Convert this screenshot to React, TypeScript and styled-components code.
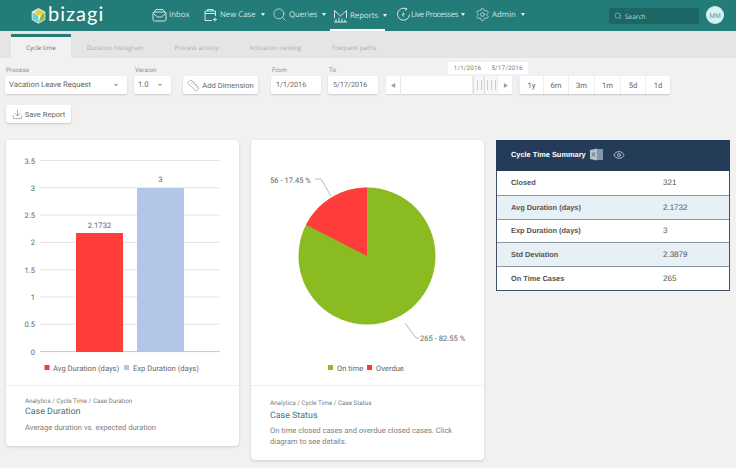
import React from "react";
import styled, { createGlobalStyle } from "styled-components";
import { ChevronDown, Download, Eye, Ruler, Search, Settings, Play } from "lucide-react";

const Global = createGlobalStyle`
  html, body { margin: 0; padding: 0; background: #f1f1f1; }
  body { font-family: Roboto, "Liberation Sans", sans-serif; color: #555; overflow: hidden; text-rendering: geometricPrecision; }
  svg text { text-rendering: geometricPrecision; }
  * { box-sizing: border-box; }
`;

const Page = styled.div`width: 736px; height: 468px; overflow: hidden; background: #f1f1f1;`;

const Header = styled.header`
  height: 31px; background: #247c79; display: flex; align-items: stretch; color: #d8ecea;
`;
const Brand = styled.div`width: 149px; padding-left: 31px; display: flex; align-items: center; gap: 2px; flex: none;`;
const BrandName = styled.span`font: 400 20px/31px Lato, sans-serif; color: #fff; letter-spacing: 1px; margin-top: -2px;`;
const Nav = styled.nav`display: flex; align-items: stretch; flex: none;`;
const NavItem = styled.div<{ $w: number; $ml?: number; $active?: boolean; $tight?: boolean }>`
  width: ${p => p.$w}px; margin-left: ${p => p.$ml ?? 0}px; height: 31px; display: flex; align-items: center; gap: ${p => (p.$tight ? 0 : 2)}px; padding-left: 3px;
  font: 400 7.8px "Open Sans", sans-serif; color: #d3e7e6; white-space: nowrap;
  letter-spacing: ${p => (p.$tight ? -0.4 : 0)}px;
  border-bottom: 2px solid ${p => (p.$active ? "#fff" : "transparent")};
  padding-top: ${p => (p.$active ? 2 : 0)}px;
  svg { flex: none; }
`;
const Caret = styled.i`
  width: 0; height: 0; margin-left: 3px; flex: none; border-left: 2.5px solid transparent; border-right: 2.5px solid transparent;
  border-top: 3px solid #e8f3f2;
`;
const SearchBox = styled.div`
  width: 90px; height: 16px; margin: 8px 0 0 81px; flex: none; background: #1c6663; border-radius: 2px;
  display: flex; align-items: center; gap: 3px; padding-left: 5px; font: 400 6.5px "Open Sans", sans-serif; color: #c5dcda;
`;
const Avatar = styled.div`
  width: 18px; height: 18px; margin: 6px 0 0 7px; flex: none; border-radius: 50%; background: #d5f2f0;
  display: flex; align-items: center; justify-content: center; font: 400 6.5px "Open Sans", sans-serif; color: #6d8a89;
`;

const TabBar = styled.div`height: 27px; background: #e5e5e5; display: flex; padding: 3px 0 0 11px; font: 400 6.2px "Open Sans", sans-serif;`;
const Tab = styled.div<{ $w: number; $active?: boolean }>`
  width: ${p => p.$w}px; flex: none; display: flex; align-items: center; justify-content: center;
  color: ${p => (p.$active ? "#6f6f6f" : "#adadad")};
  background: ${p => (p.$active ? "#f1f1f1" : "transparent")};
  border-top: 3px solid ${p => (p.$active ? "#247c79" : "transparent")};
`;

const Filters = styled.div`display: flex; align-items: flex-end; padding: 8px 0 0 5px; height: 36px; position: relative;`;
const Field = styled.div<{ $w: number; $ml: number }>`
  width: ${p => p.$w}px; margin-left: ${p => p.$ml}px; flex: none; display: flex; flex-direction: column;
`;
const FieldLabel = styled.label`font: 400 6.2px/9px Roboto, sans-serif; color: #8c8c8c; height: 10px; letter-spacing: .1px; padding-left: 1px;`;
const Control = styled.div<{ $small?: boolean }>`
  height: 18px; background: #fff; border-radius: 2px; box-shadow: 0 1px 2px rgba(0,0,0,.16);
  font: 400 ${p => (p.$small ? 7.2 : 7.7)}px/18px Roboto, "Liberation Sans", sans-serif; color: #666;
  display: flex; align-items: center; justify-content: space-between; padding: 0 7px 0 ${p => (p.$small ? 5 : 4)}px;
`;
const ActionButton = styled.button<{ $w: number; $ml?: number }>`
  width: ${p => p.$w}px; height: 18px; margin-left: ${p => p.$ml ?? 0}px; flex: none; border: 0; padding: 0; background: #fff;
  border-radius: 2px; box-shadow: 0 1px 2px rgba(0,0,0,.18); display: flex; align-items: center; justify-content: center; gap: 2px;
  font: 400 7.6px Roboto, "Liberation Sans", sans-serif; color: #666;
`;
const Slider = styled.div`width: 126px; height: 18px; margin-left: 8px; flex: none; display: flex; gap: 1px; background: #f1f1f1;`;
const SliderArrow = styled.div`width: 14px; background: #fff; box-shadow: 0 1px 1px rgba(0,0,0,.1); display: flex; align-items: center; justify-content: center; flex: none;`;
const SliderTrack = styled.div`flex: 1; background: #fff; box-shadow: 0 1px 1px rgba(0,0,0,.1);`;
const Grip = styled.div<{ $w: number; $bars: number }>`
  width: ${p => p.$w}px; flex: none; background-color: #f7f7f7; background-image: repeating-linear-gradient(90deg, transparent 0 2px, #ccc 2px 3px, transparent 3px 4px);
  background-size: ${p => p.$bars * 4}px 10px; background-position: center; background-repeat: no-repeat; box-shadow: 0 1px 1px rgba(0,0,0,.08);
  border-left: 1px solid #e0e0e0;
`;
const DateTip = styled.div<{ $x: number; $w: number }>`
  position: absolute; left: ${p => p.$x}px; top: 4px; width: ${p => p.$w}px; height: 12px; background: #fff; border-radius: 2px;
  font: 400 6.2px/12px Roboto, sans-serif; letter-spacing: .2px; text-align: center; color: #777;
`;
const Ranges = styled.div`margin-left: 7px; display: flex; height: 18px; flex: none; background: #fff; border-radius: 2px; box-shadow: 0 1px 2px rgba(0,0,0,.18);`;
const RangeBtn = styled.div<{ $w: number }>`
  width: ${p => p.$w}px; border-left: 1px solid #efefef; display: flex; align-items: center; justify-content: center;
  font: 400 7.7px Roboto, sans-serif; color: #666;
`;
const SaveRow = styled.div`padding: 11px 0 0 6px; height: 28px; display: flex;`;

const Columns = styled.main`display: grid; grid-template-columns: 233px 233px 234px; column-gap: 12px; padding: 18px 0 0 6px; align-items: start;`;
const Card = styled.section`background: #fff; border-radius: 4px; box-shadow: 0 1px 3px rgba(0,0,0,.15);`;
const ChartBox = styled.div`height: 246px; border-bottom: 1px solid #efefef;`;
const ChartSvg = styled.svg`display: block;`;
const Caption = styled.div<{ $pt: number; $titleGap: number; $h: number }>`
  height: ${p => p.$h}px; padding: ${p => p.$pt}px 19px 0; display: flex; flex-direction: column;
  h3 { margin: ${p => p.$titleGap}px 0 0; font: 400 8.9px/13px Roboto, sans-serif; color: #38797d; }
`;
const Crumb = styled.div`font: 400 6.3px/8px Roboto, sans-serif; color: #7a7a7a;`;
const Desc = styled.p<{ $mt: number }>`margin: ${p => p.$mt}px 0 0; font: 400 7.6px/11px Roboto, sans-serif; color: #808080;`;

const Summary = styled.section`background: #fff; border: 1px solid #3f5064; border-top: 0; height: 151px;`;
const SummaryHead = styled.div`
  height: 31px; margin: 0 -1px; background: #253c59; display: flex; align-items: center; padding: 0 0 2px 15px; color: #fff;
  font: 700 7.4px "Liberation Sans", sans-serif;
`;
const ExcelWrap = styled.span`margin-left: 4px; display: flex;`;
const EyeWrap = styled.span`margin-left: 10px; display: flex; color: #dfe5ec;`;
const Row = styled.div<{ $alt?: boolean }>`
  height: 23.8px; display: grid; grid-template-columns: 152px 1fr; align-items: center; padding: 0 0 0 14px;
  background: ${p => (p.$alt ? "#e6f0f5" : "#fff")}; border-top: 1px solid #8a96a3; font: 400 8px "Liberation Sans", sans-serif; color: #555;
  &:nth-child(2) { border-top: 0; }
  b { font-weight: 700; color: #555; font-size: 7.4px; }
`;
const tick = { fontFamily: "Roboto, sans-serif", fontSize: 7.6, fill: "#666" };

const Logo = () => (
  <svg width="15" height="16" viewBox="0 0 15 16">
    <path d="M7.5 1 L13.5 4.2 V11.3 L7.5 14.8 L1.5 11.3 V4.2 Z" fill="#fff" stroke="#dff3ef" strokeWidth="1.6" strokeLinejoin="round" />
    <path d="M7.5 1 L13.5 4.2 L7.5 8 L3 5 Z" fill="#f2c84b" />
    <path d="M1.5 4.2 L7.5 8 V14.8 L1.5 11.3 Z" fill="#6fd0cf" />
    <path d="M13.5 4.2 V11.3 L7.5 14.8 L10 7 Z" fill="#8dbb3a" />
  </svg>
);
const stroke = { fill: "none", stroke: "#d3e7e6", strokeWidth: 1 };
const Inbox = () => (
  <svg width="15" height="14" viewBox="0 0 15 14" {...stroke}>
    <rect x="1" y="4" width="13" height="9" rx="1.5" />
    <path d="M1.5 5 L4 1.5 H11 L13.5 5 M1.5 5.5 L5.5 9 H9.5 L13.5 5.5" />
  </svg>
);
const NewCase = () => (
  <svg width="15" height="14" viewBox="0 0 15 14" {...stroke}>
    <path d="M9 12.5 H2 V3 H12.5 V8 M2 5.5 H12.5 M4.5 3 V1.5 H10 V3 M12 9.5 V13.5 M10 11.5 H14" />
  </svg>
);
const ReportsIcon = () => (
  <svg width="15" height="14" viewBox="0 0 15 14" {...stroke}>
    <path d="M1.5 9 V1.5 L7.5 7 L13.5 1.5 V9 M1 13 H14 M3 13 V10 M6 13 V8.5 M9 13 V9.5 M12 13 V10.5" />
  </svg>
);
const LiveIcon = () => (
  <svg width="15" height="15" viewBox="0 0 15 15" {...stroke}>
    <path d="M10.5 2 A6 6 0 1 0 13.5 7.5 M10 0.8 L10.8 2.3 L9 3.5" />
    <path d="M6.5 4.5 L9 7.5 H7.2 L8 10.5 L5.5 7.2 H7.2 Z" fill="#d3e7e6" stroke="none" />
  </svg>
);
const ExcelIcon = () => (
  <svg width="13" height="13" viewBox="0 0 13 13">
    <rect x="5" y="1" width="8" height="11" fill="#8496aa" />
    <path d="M0 2 L7 0.5 V12.5 L0 11 Z" fill="#b4c0cc" />
    <path d="M2 4.5 L5 8.5 M5 4.5 L2 8.5" stroke="#4a5f78" strokeWidth=".9" />
  </svg>
);

const navItems = [
  { w: 51, label: "Inbox", icon: <Inbox /> },
  { w: 69, label: "New Case", icon: <NewCase />, caret: true },
  { w: 61, label: "Queries", icon: <Search size={15} strokeWidth={1.2} />, caret: true },
  { w: 55, label: "Reports", icon: <ReportsIcon />, caret: true, active: true },
  { w: 79, ml: 8, label: "Live Processes", icon: <LiveIcon />, caret: true, tight: true },
  { w: 56, label: "Admin", icon: <Settings size={15} strokeWidth={1.1} />, caret: true },
];
const tabs = [
  { w: 60, label: "Cycle time", active: true },
  { w: 88, label: "Duration histogram" },
  { w: 75, label: "Process activity" },
  { w: 83, label: "Activation ranking" },
  { w: 74, label: "Frequent paths" },
];
const ranges = [{ l: "1y", w: 24 }, { l: "6m", w: 25 }, { l: "3m", w: 26 }, { l: "1m", w: 26 }, { l: "5d", w: 25 }, { l: "1d", w: 25 }];
const rows = [
  ["Closed", "321"], ["Avg Duration (days)", "2.1732"], ["Exp Duration (days)", "3"], ["Std Deviation", "2.3879"], ["On Time Cases", "265"],
];
const yTicks = ["3.5", "3", "2.5", "2", "1.5", "1", "0.5", "0"];

const BarChart = () => (
  <ChartSvg width="233" height="246" viewBox="0 0 233 246">
    {yTicks.map((t, i) => {
      const y = 20.5 + i * 27.3;
      return (
        <g key={t}>
          <line x1="34" x2="214" y1={y} y2={y} stroke={i === 7 ? "#c8c8c8" : "#e4e4e4"} />
          <text x="29" y={y + 3} textAnchor="end" {...tick}>{t}</text>
        </g>
      );
    })}
    <rect x="70" y="93" width="47" height="119" fill="#ff3d3d" />
    <rect x="131" y="48" width="47" height="164" fill="#b4c6e7" />
    <text x="93.5" y="88" textAnchor="middle" {...tick}>2.1732</text>
    <text x="154.5" y="42" textAnchor="middle" {...tick}>3</text>
    <rect x="38.5" y="225" width="5" height="5" fill="#f23b3b" />
    <text x="47" y="231" {...tick}>Avg Duration (days)</text>
    <rect x="118" y="225" width="5" height="5" fill="#b4c6e7" />
    <text x="127" y="231" {...tick}>Exp Duration (days)</text>
  </ChartSvg>
);

const PieChart = () => (
  <ChartSvg width="233" height="246" viewBox="0 0 233 246">
    <circle cx="116" cy="116" r="68.5" fill="#8abb21" />
    <path d="M116 116 L116 47.5 A68.5 68.5 0 0 0 55.1 84.7 Z" fill="#ff3d3d" />
    <path d="M64 39 L70 39 L80 56" fill="none" stroke="#aaa" strokeWidth=".8" />
    <path d="M154 183 L165 198 L168 198" fill="none" stroke="#aaa" strokeWidth=".8" />
    <text x="19" y="43" {...tick}>56 - 17.45 %</text>
    <text x="169" y="201" {...tick}>265 - 82.55 %</text>
    <rect x="77" y="225" width="5" height="5" fill="#8abb21" />
    <text x="86" y="231" {...tick}>On time</text>
    <rect x="116" y="225" width="5" height="5" fill="#f23b3b" />
    <text x="125" y="231" {...tick}>Overdue</text>
  </ChartSvg>
);

export default function App() {
  return (
    <Page>
      <Global />
      <Header>
        <Brand><Logo /><BrandName>bizagi</BrandName></Brand>
        <Nav>
          {navItems.map(n => (
            <NavItem key={n.label} $w={n.w} $ml={n.ml} $active={n.active} $tight={n.tight}>
              {n.icon}<span>{n.label}</span>{n.caret && <Caret />}
            </NavItem>
          ))}
        </Nav>
        <SearchBox><Search size={8} strokeWidth={1.5} /><span>Search</span></SearchBox>
        <Avatar>MM</Avatar>
      </Header>
      <TabBar>
        {tabs.map(t => <Tab key={t.label} $w={t.w} $active={t.active}>{t.label}</Tab>)}
      </TabBar>
      <Filters>
        <Field $w={122} $ml={0}>
          <FieldLabel>Process</FieldLabel>
          <Control>Vacation Leave Request<ChevronDown size={8} color="#aaa" fill="#aaa" /></Control>
        </Field>
        <Field $w={37} $ml={7}>
          <FieldLabel>Version</FieldLabel>
          <Control>1.0<ChevronDown size={8} color="#aaa" fill="#aaa" /></Control>
        </Field>
        <ActionButton $w={75} $ml={12}><Ruler size={13} strokeWidth={1} color="#777" />Add Dimension</ActionButton>
        <Field $w={50} $ml={13}>
          <FieldLabel>From</FieldLabel>
          <Control $small>1/1/2016</Control>
        </Field>
        <Field $w={50} $ml={7}>
          <FieldLabel>To</FieldLabel>
          <Control $small>5/17/2016</Control>
        </Field>
        <Slider>
          <SliderArrow><Play size={5} color="#999" fill="#999" style={{ transform: "scaleX(-1)" }} /></SliderArrow>
          <SliderTrack />
          <Grip $w={10} $bars={2} />
          <Grip $w={13} $bars={3} />
          <SliderArrow><Play size={5} color="#999" fill="#999" /></SliderArrow>
        </Slider>
        <Ranges>{ranges.map(r => <RangeBtn key={r.l} $w={r.w}>{r.l}</RangeBtn>)}</Ranges>
        <DateTip $x={448} $w={39}>1/1/2016</DateTip>
        <DateTip $x={486} $w={42}>5/17/2016</DateTip>
      </Filters>
      <SaveRow>
        <ActionButton $w={65}><Download size={11} strokeWidth={1.2} color="#666" />Save Report</ActionButton>
      </SaveRow>
      <Columns>
        <Card>
          <ChartBox><BarChart /></ChartBox>
          <Caption $pt={11} $titleGap={1} $h={60}>
            <Crumb>Analytics / Cycle Time / Case Duration</Crumb>
            <h3>Case Duration</h3>
            <Desc $mt={3}>Average duration vs. expected duration</Desc>
          </Caption>
        </Card>
        <Card>
          <ChartBox><PieChart /></ChartBox>
          <Caption $pt={13} $titleGap={3} $h={74}>
            <Crumb>Analytics / Cycle Time / Case Status</Crumb>
            <h3>Case Status</h3>
            <Desc $mt={2}>On time closed cases and overdue closed cases. Click diagram to see details.</Desc>
          </Caption>
        </Card>
        <Summary>
          <SummaryHead>
            Cycle Time Summary
            <ExcelWrap><ExcelIcon /></ExcelWrap>
            <EyeWrap><Eye size={12} strokeWidth={1.4} /></EyeWrap>
          </SummaryHead>
          {rows.map((r, i) => (
            <Row key={r[0]} $alt={i % 2 === 1}><b>{r[0]}</b><span>{r[1]}</span></Row>
          ))}
        </Summary>
      </Columns>
    </Page>
  );
}
